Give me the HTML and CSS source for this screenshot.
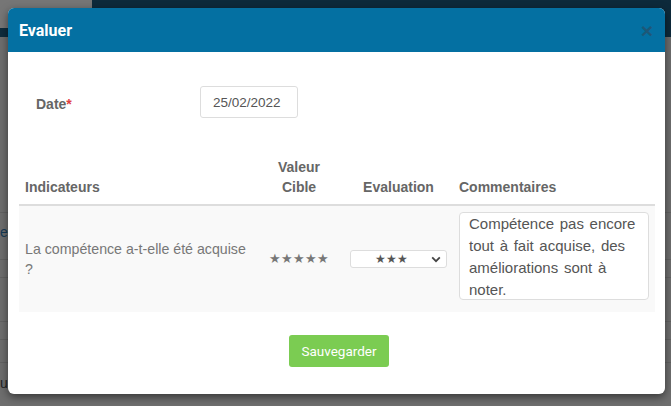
FILE: index.html
```html
<!DOCTYPE html>
<html lang="fr">
<head>
    <meta charset="UTF-8">
    <meta name="viewport" content="width=device-width, initial-scale=1.0">
    <title>Evaluer</title>
    <link rel="stylesheet" href="styles.css">
</head>
<body>

    <!-- Page derriere la modale (assombrie) -->
    <div class="page">
        <div class="page-top">
            <div class="side-top">
                <div class="side-gray"></div>
                <div class="side-bar"></div>
            </div>
            <div class="banner"></div>
        </div>
        <div class="page-rows">
            <div class="page-row r1"><span class="page-link">el</span></div>
            <div class="page-row r2"></div>
            <div class="page-row r3"></div>
            <div class="page-row r2"></div>
            <div class="page-row r4"></div>
            <div class="page-row r5"><span class="page-text">ua</span></div>
        </div>
    </div>

    <div class="modal">
        <div class="modal-header">
            <h4 class="modal-title">Evaluer</h4>
            <span class="modal-close">&times;</span>
        </div>

        <div class="modal-body">
            <div class="form-row">
                <label class="form-label" for="date-input">Date<span class="required">*</span></label>
                <input type="text" id="date-input" class="date-input" value="25/02/2022">
            </div>

            <table class="eval-table">
                <colgroup>
                    <col class="col-ind">
                    <col class="col-val">
                    <col class="col-eval">
                    <col class="col-com">
                </colgroup>
                <thead>
                    <tr>
                        <th>Indicateurs</th>
                        <th class="center">Valeur<br>Cible</th>
                        <th class="center">Evaluation</th>
                        <th class="com">Commentaires</th>
                    </tr>
                </thead>
                <tbody>
                    <tr>
                        <td class="indicator">La compétence a-t-elle été acquise ?</td>
                        <td class="center stars">★★★★★</td>
                        <td class="center">
                            <div class="select-wrap">
                                <select class="star-select">
                                    <option>★★★</option>
                                </select>
                                <svg class="chevron" width="10" height="7" viewBox="0 0 10 7">
                                    <path d="M1.2 1.4 L5 5.2 L8.8 1.4" fill="none" stroke="#444" stroke-width="1.8"/>
                                </svg>
                            </div>
                        </td>
                        <td class="com">
                            <textarea class="comment" rows="4">Compétence pas encore tout à fait acquise, des améliorations sont à noter.</textarea>
                        </td>
                    </tr>
                </tbody>
            </table>
        </div>

        <div class="modal-footer">
            <button class="btn-save">Sauvegarder</button>
        </div>
    </div>

</body>
</html>
```

FILE: styles.css
```css
/* Base */
body {
    margin: 0;
    height: 406px;
    overflow: hidden;
    position: relative;
    background-color: #6e6e6e; /* fond assombri */
    font-family: "Liberation Sans", Arial, sans-serif;
}

/* Page en arriere-plan */
.page-top {
    display: flex;
    height: 37px;
}
.side-top {
    width: 92px;
    display: flex;
    flex-direction: column;
}
.side-gray {
    height: 28px;
    background-color: #767676;
}
.side-bar {
    flex: 1;
    background-color: #0f2c3d;
}
.banner {
    flex: 1;
    background-color: #0d2a3b;
}
.page-rows {
    padding-top: 175px;
}
.page-row {
    border-top: 1px solid #626262;
    font-size: 14px;
}
.page-row.r1 { height: 46px; line-height: 38px; }
.page-row.r2 { height: 17px; }
.page-row.r3 { height: 43px; }
.page-row.r4 { height: 22px; }
.page-row.r5 { height: 42px; line-height: 40px; }
.page-link {
    color: #163a55;
}
.page-text {
    color: #222;
}

/* Modale */
.modal {
    position: absolute;
    left: 8px;
    top: 8px;
    width: 657px;
    background-color: #fff;
    border-radius: 6px;
    overflow: hidden;
    box-shadow: 0 3px 9px rgba(0, 0, 0, 0.5);
}
.modal-header {
    height: 44px;
    background-color: #0470a2;
    display: flex;
    align-items: center;
    justify-content: space-between;
    padding: 0 12px 0 11px;
}
.modal-title {
    margin: 0;
    color: #fff;
    font-family: Roboto, "Liberation Sans", sans-serif;
    font-size: 16px;
    font-weight: bold;
}
.modal-close {
    color: #1d5878;
    font-size: 21px;
    font-weight: bold;
    line-height: 1;
}

.modal-body {
    padding: 34px 10px 0 11px;
}

/* Champ date */
.form-row {
    display: flex;
    align-items: center;
    height: 32px;
    margin-bottom: 35px;
}
.form-label {
    width: 164px;
    padding: 3px 0 0 17px;
    color: #666;
    font-size: 14px;
    font-weight: bold;
}
.required {
    color: #e04040;
}
.date-input {
    width: 98px;
    height: 32px;
    box-sizing: border-box;
    padding: 0 12px;
    border: 1px solid #ddd;
    border-radius: 3px;
    color: #555;
    font-family: "Liberation Sans", Arial, sans-serif;
    font-size: 13.5px;
}

/* Tableau des indicateurs */
.eval-table {
    width: 636px;
    border-collapse: collapse;
    table-layout: fixed;
}
.col-ind { width: 237px; }
.col-val { width: 86px; }
.col-eval { width: 113px; }
.col-com { width: 200px; }

.eval-table th {
    padding: 4px 6px 7px;
    line-height: 20px;
    color: #666;
    font-size: 14px;
    font-weight: bold;
    text-align: left;
    vertical-align: bottom;
    border-bottom: 2px solid #ddd;
}
.eval-table td {
    padding: 6px;
    line-height: 20px;
    color: #777;
    font-size: 14px;
    vertical-align: middle;
    background-color: #f9f9f9;
}
.eval-table td.indicator {
    font-size: 14.2px;
}
.eval-table .center {
    text-align: center;
}
.eval-table .com {
    padding-left: 4px;
}
.eval-table td.stars {
    color: #777;
    font-size: 13px;
}

/* Select etoiles */
.select-wrap {
    position: relative;
    width: 97px;
    margin-left: 2px;
}
.star-select {
    display: block;
    width: 97px;
    height: 18px;
    padding: 0 14px 0 0;
    border: 1px solid #ddd;
    border-radius: 3px;
    background-color: #fff;
    color: #555;
    font-size: 12px;
    text-align: center;
    text-align-last: center;
    appearance: none;
    -webkit-appearance: none;
}
.chevron {
    position: absolute;
    right: 6px;
    top: 6px;
}

/* Commentaire */
.comment {
    display: block;
    width: 190px;
    height: 88px;
    margin-bottom: 6px;
    box-sizing: border-box;
    padding: 0 2px 0 9px;
    border: 1px solid #ddd;
    border-radius: 4px;
    color: #555;
    font-family: "Liberation Sans", Arial, sans-serif;
    font-size: 15px;
    word-spacing: 1.5px;
    line-height: 22px;
    resize: none;
    overflow: hidden;
}

/* Pied */
.modal-footer {
    padding: 23px 0 27px 5px;
    text-align: center;
}
.btn-save {
    height: 32px;
    padding: 0 12px;
    border: none;
    border-radius: 3px;
    background-color: #7bcc52;
    color: #fff;
    font-family: Roboto, "Liberation Sans", sans-serif;
    font-size: 13.5px;
}
```
